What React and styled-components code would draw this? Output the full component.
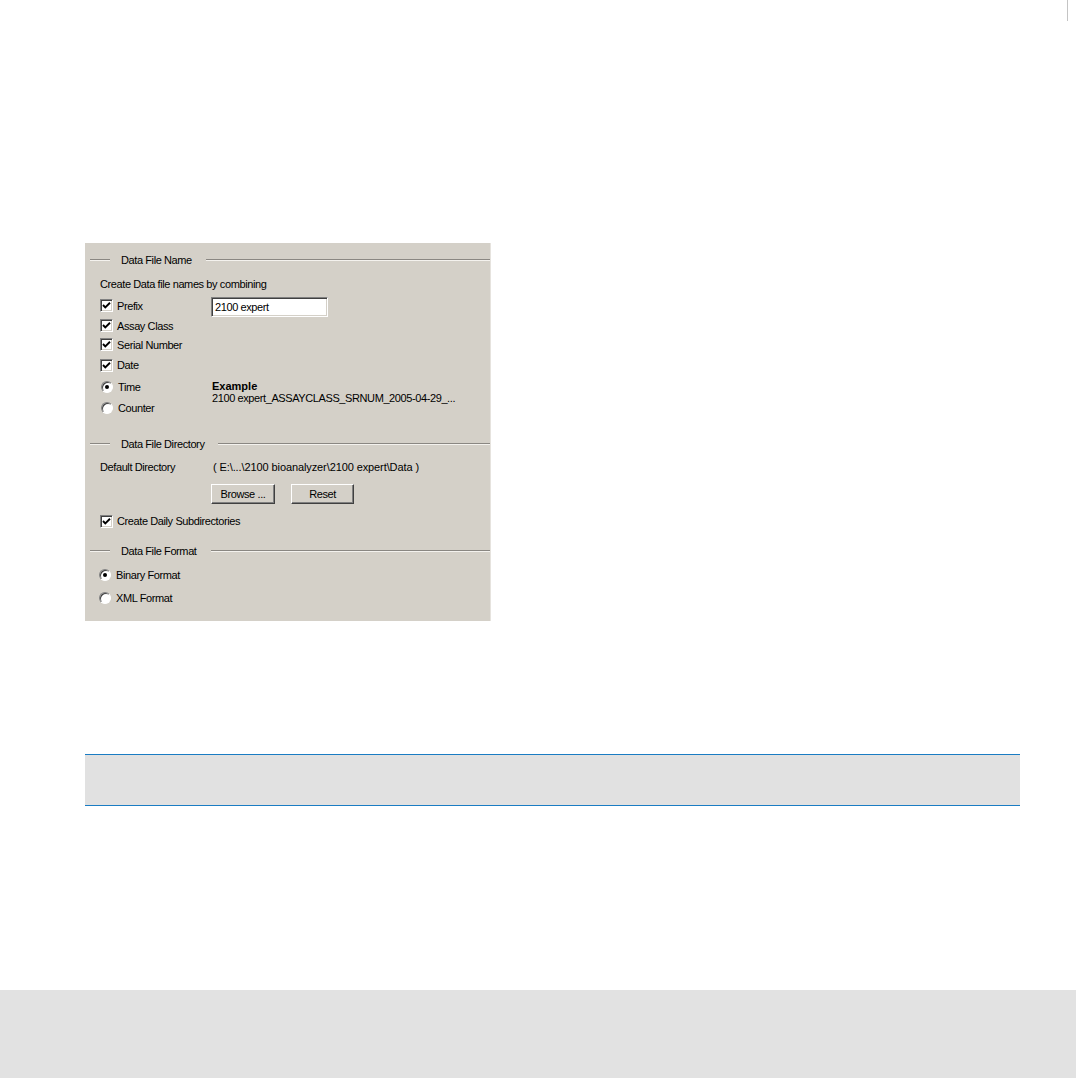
import React from 'react';
import styled, { createGlobalStyle } from 'styled-components';

const GlobalStyle = createGlobalStyle`
  html, body {
    margin: 0;
    padding: 0;
    background: #ffffff;
  }
  body {
    font-family: "Liberation Sans", Arial, sans-serif;
  }
`;

const Page = styled.div`
  width: 1076px;
  height: 1078px;
  display: flex;
  flex-direction: column;
  overflow: hidden;
`;

const TopStrip = styled.div`
  height: 22px;
  display: flex;
  justify-content: flex-end;
`;

const EdgeMark = styled.div`
  width: 1px;
  height: 21px;
  margin-right: 8px;
  background: #c4c4c4;
`;

const Dialog = styled.div`
  margin: 221px 0 0 85px;
  width: 406px;
  height: 378px;
  box-sizing: border-box;
  background: #d4d0c8;
  border-right: 1px solid #e6e3de;
  font-size: 11px;
  letter-spacing: -0.4px;
  color: #000;
  display: flex;
  flex-direction: column;
  white-space: nowrap;
`;

const GroupHeader = styled.div`
  display: flex;
  align-items: center;
  height: 24px;
  margin-top: ${p => p.$mt || 0}px;
  padding-left: 5px;
  gap: 11px;
`;

const Etch = styled.div`
  height: 0;
  border-top: 1px solid #8a8782;
  border-bottom: 1px solid #f4f2ee;
  width: ${p => (p.$w ? `${p.$w}px` : 'auto')};
  flex: ${p => (p.$w ? 'none' : 1)};
  margin-left: ${p => p.$ml || 0}px;
`;

const GroupTitle = styled.span`
  white-space: nowrap;
`;

const Row = styled.div`
  display: flex;
  align-items: ${p => p.$align || 'center'};
  height: ${p => p.$h}px;
  padding-left: ${p => (p.$pl ?? 15)}px;
  box-sizing: border-box;
`;

const LabelCol = styled.div`
  width: 111px;
  flex: none;
  display: flex;
  align-items: center;
  gap: ${p => p.$gap ?? 4}px;
  white-space: nowrap;
  overflow: visible;
`;

const PathText = styled.span`
  letter-spacing: -0.1px;
  padding-left: 2px;
`;

const Split = styled.div`
  display: flex;
  padding-left: 15px;
`;

const Stack = styled.div`
  display: flex;
  flex-direction: column;
`;

const ExampleBox = styled.div`
  padding-top: 4px;
  line-height: 12px;
  white-space: nowrap;
`;

const ExampleTitle = styled.div`
  font-weight: bold;
  letter-spacing: 0;
`;

const Box = styled.span`
  width: 13px;
  height: 13px;
  box-sizing: border-box;
  flex: none;
  background: #fff;
  border: 1px solid;
  border-color: #808080 #ffffff #ffffff #808080;
  box-shadow: inset 1px 1px #404040, inset -1px -1px #d4d0c8;
  display: flex;
  align-items: center;
  justify-content: center;
`;

const Radio = styled.span`
  width: 12px;
  height: 12px;
  box-sizing: border-box;
  flex: none;
  border-radius: 50%;
  background: #fff;
  border: 1px solid;
  border-color: #808080 #ffffff #ffffff #808080;
  box-shadow: inset 1px 1px #404040;
  display: flex;
  align-items: center;
  justify-content: center;
  &::after {
    content: '';
    width: 4px;
    height: 4px;
    border-radius: 50%;
    background: ${p => (p.$on ? '#000' : 'transparent')};
  }
`;

const TextField = styled.div`
  width: 117px;
  height: 20px;
  margin-top: 3px;
  box-sizing: border-box;
  background: #fff;
  border: 1px solid;
  border-color: #808080 #ffffff #ffffff #808080;
  box-shadow: inset 1px 1px #404040, inset -1px -1px #d4d0c8;
  padding: 0 3px;
  display: flex;
  align-items: center;
  font-size: 11px;
`;

const ButtonRow = styled.div`
  display: flex;
  gap: 16px;
  padding: 6px 0 0 126px;
  height: 30px;
  box-sizing: border-box;
`;

const WinButton = styled.div`
  width: ${p => p.$w}px;
  height: 20px;
  box-sizing: border-box;
  background: #d4d0c8;
  border: 1px solid;
  border-color: #ffffff #404040 #404040 #ffffff;
  box-shadow: inset -1px -1px #808080;
  display: flex;
  align-items: center;
  justify-content: center;
`;

const Band = styled.div`
  margin: 133px 0 0 85px;
  width: 935px;
  height: 52px;
  box-sizing: border-box;
  background: #e1e1e1;
  border-top: 1px solid #1a7cc3;
  border-bottom: 1px solid #1a7cc3;
`;

const Footer = styled.div`
  margin-top: 184px;
  height: 88px;
  background: #e2e2e2;
`;

const Check = () => (
  <Box>
    <svg width="9" height="9" viewBox="0 0 9 9">
      <polyline points="1,4 3.3,6.4 8,1.8" fill="none" stroke="#000" strokeWidth="1.9" />
    </svg>
  </Box>
);

function Header({ title, lead = 20, mt }) {
  return (
    <GroupHeader $mt={mt}>
      <Etch $w={lead} />
      <GroupTitle>{title}</GroupTitle>
      <Etch $ml={3} />
    </GroupHeader>
  );
}

function CheckRow({ label, h, children }) {
  return (
    <Row $h={h}>
      <LabelCol>
        <Check />
        <span>{label}</span>
      </LabelCol>
      {children}
    </Row>
  );
}

export default function App() {
  return (
    <>
      <GlobalStyle />
      <Page>
        <TopStrip>
          <EdgeMark />
        </TopStrip>
        <Dialog>
          <Header title="Data File Name" mt={5} />
          <Row $h={23}>Create Data file names by combining</Row>
          <CheckRow label="Prefix" h={21}>
            <TextField>2100 expert</TextField>
          </CheckRow>
          <CheckRow label="Assay Class" h={19} />
          <CheckRow label="Serial Number" h={19} />
          <CheckRow label="Date" h={22} />
          <Split>
            <Stack>
              <Row $h={22} $pl={1}>
                <LabelCol $gap={5}>
                  <Radio $on />
                  <span>Time</span>
                </LabelCol>
              </Row>
              <Row $h={20} $pl={1}>
                <LabelCol $gap={5}>
                  <Radio />
                  <span>Counter</span>
                </LabelCol>
              </Row>
            </Stack>
            <ExampleBox>
              <ExampleTitle>Example</ExampleTitle>
              <div>2100 expert_ASSAYCLASS_SRNUM_2005-04-29_...</div>
            </ExampleBox>
          </Split>

          <Header title="Data File Directory" mt={14} />
          <Row $h={22}>
            <LabelCol>Default Directory</LabelCol>
            <PathText>( E:\...\2100 bioanalyzer\2100 expert\Data )</PathText>
          </Row>
          <ButtonRow>
            <WinButton $w={64}>Browse ...</WinButton>
            <WinButton $w={63}>Reset</WinButton>
          </ButtonRow>
          <CheckRow label="Create Daily Subdirectories" h={26} />

          <Header title="Data File Format" mt={5} />
          <Row $h={24} $pl={14}>
            <LabelCol $gap={5}>
              <Radio $on />
              <span>Binary Format</span>
            </LabelCol>
          </Row>
          <Row $h={22} $pl={14}>
            <LabelCol $gap={5}>
              <Radio />
              <span>XML Format</span>
            </LabelCol>
          </Row>
        </Dialog>
        <Band />
        <Footer />
      </Page>
    </>
  );
}
